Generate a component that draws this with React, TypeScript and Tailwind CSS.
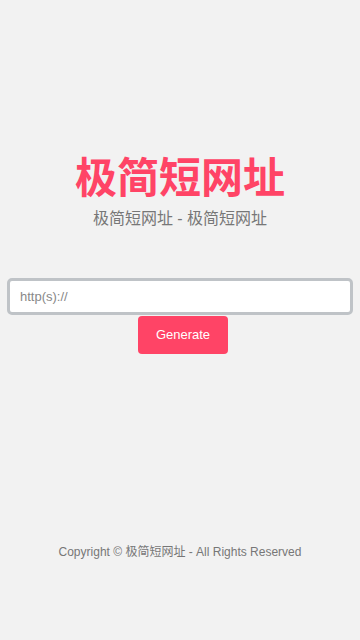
import { useState } from 'react'

export default function App() {
  const [url, setUrl] = useState('')

  return (
    <div className="min-h-[640px] bg-[#f2f2f2] flex flex-col font-['Liberation_Sans','Noto_Sans_CJK_SC',sans-serif]">
      <main className="flex flex-col items-center pt-[158px]">
        <h1 className="text-[42px] leading-[42px] font-bold text-[#ff4466]">极简短网址</h1>
        <p className="mt-[9px] text-[16px] leading-[20px] text-[#777]">极简短网址 - 极简短网址</p>
      </main>

      <form
        className="mt-[49px] px-[7px] flex flex-col items-center"
        onSubmit={(e) => e.preventDefault()}
      >
        <input
          value={url}
          onChange={(e) => setUrl(e.target.value)}
          placeholder="http(s)://"
          className="w-full h-[37px] bg-white border-[3px] border-[#bfc3c7] rounded-[5px] px-[10px] text-[13px] text-[#333] placeholder:text-[#888] outline-none"
        />
        <button
          type="submit"
          className="mt-px ml-[6px] w-[90px] h-[38px] rounded-[4px] bg-[#ff4466] text-white text-[13px]"
        >
          Generate
        </button>
      </form>

      <footer className="mt-[190px] text-center text-[12px] leading-[16px] text-[#777]">
        Copyright © 极简短网址 - All Rights Reserved
      </footer>
    </div>
  )
}
